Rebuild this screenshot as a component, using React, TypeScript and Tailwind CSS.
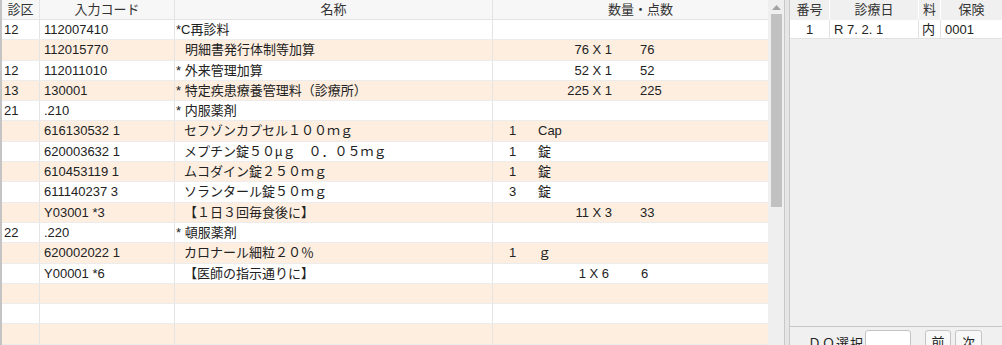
import React from 'react';

type Row = {
  k?: string;
  code?: string;
  name?: string;
  indent?: number;
  qty?: string;
  unit?: string;
  times?: string;
  tpad?: number;
  pts?: string;
  ppad?: number;
};

const rows: Row[] = [
  { k: '12', code: '112007410', name: '*C再診料' },
  { code: '112015770', name: '明細書発行体制等加算', indent: 9, times: '76 X 1', pts: '76' },
  { k: '12', code: '112011010', name: '* 外来管理加算', times: '52 X 1', pts: '52' },
  { k: '13', code: '130001', name: '* 特定疾患療養管理料（診療所）', times: '225 X 1', pts: '225' },
  { k: '21', code: '.210', name: '* 内服薬剤' },
  { code: '616130532 1', name: 'セフゾンカプセル１００ｍｇ', indent: 8, qty: '1', unit: 'Cap' },
  { code: '620003632 1', name: 'メプチン錠５０µｇ　０．０５ｍｇ', indent: 8, qty: '1', unit: '錠' },
  { code: '610453119 1', name: 'ムコダイン錠２５０ｍｇ', indent: 8, qty: '1', unit: '錠' },
  { code: '611140237 3', name: 'ソランタール錠５０ｍｇ', indent: 8, qty: '3', unit: '錠' },
  { code: 'Y03001 *3', name: '【１日３回毎食後に】', indent: 8, times: '11 X 3', pts: '33' },
  { k: '22', code: '.220', name: '* 頓服薬剤' },
  { code: '620002022 1', name: 'カロナール細粒２０％', indent: 8, qty: '1', unit: 'ｇ' },
  { code: 'Y00001 *6', name: '【医師の指示通りに】', indent: 8, times: '1 X 6', tpad: 3, pts: '6', ppad: 29 },
  {},
  {},
  {},
];

function Qty({ r }: { r: Row }) {
  if (r.qty) {
    return (
      <div className="flex">
        <span className="w-[45px] pl-[16px]">{r.qty}</span>
        <span>{r.unit}</span>
      </div>
    );
  }
  if (r.times) {
    return (
      <div className="flex">
        <span className="w-[119px] text-right" style={{ paddingRight: r.tpad ?? 0 }}>
          {r.times}
        </span>
        <span style={{ paddingLeft: r.ppad ?? 28 }}>{r.pts}</span>
      </div>
    );
  }
  return null;
}

function OrderTable() {
  return (
    <div className="flex w-[768px] shrink-0 flex-col border-l-2 border-[#c4c4c4] bg-white">
      <div className="flex h-[20px] shrink-0 items-center border-b border-[#e4e4e4] bg-[#f7f7f7] text-[#333]">
        <div className="w-[38px] border-r border-[#e4e4e4] text-center">診区</div>
        <div className="w-[135px] border-r border-[#e4e4e4] text-center">入力コード</div>
        <div className="w-[318px] border-r border-[#e4e4e4] text-center">名称</div>
        <div className="flex-1 pl-[115px]">数量・点数</div>
      </div>
      {rows.map((r, i) => (
        <div
          key={i}
          className={`flex h-[20.3px] shrink-0 items-center border-b border-[#ececec] ${
            i % 2 === 1 ? 'bg-[#fdeee0]' : 'bg-white'
          }`}
        >
          <div className="h-full w-[38px] border-r border-[#e4e4e4] pl-[2px] leading-[20px]">{r.k}</div>
          <div className="h-full w-[135px] border-r border-[#e4e4e4] pl-[4px] leading-[20px]">{r.code}</div>
          <div className="h-full w-[318px] border-r border-[#e4e4e4] pl-[1px] leading-[20px] whitespace-nowrap">
            <span style={{ marginLeft: r.indent ?? 0 }}>{r.name}</span>
          </div>
          <div className="h-full flex-1 leading-[20px]">
            <Qty r={r} />
          </div>
        </div>
      ))}
    </div>
  );
}

function ScrollBar() {
  return (
    <div className="flex w-[16px] shrink-0 flex-col items-center bg-[#efefef] pt-[5px]">
      <svg width="9" height="5" viewBox="0 0 9 5">
        <polygon points="0,5 4.5,0 9,5" fill="#a3a3a3" />
      </svg>
      <div className="mt-[4px] h-[193px] w-[11px] bg-[#c1c1c1]" />
    </div>
  );
}

function HistoryPanel() {
  return (
    <div className="flex flex-1 flex-col bg-[#f0f0f0]">
      <div className="flex h-[327px] shrink-0 flex-col border-b border-[#c6c6c6]">
        <div className="flex h-[20px] items-center text-[#333]">
          <div className="w-[40px] border-r border-white text-center">番号</div>
          <div className="w-[89px] border-r border-white text-center">診療日</div>
          <div className="w-[22px] border-r border-white text-center">料</div>
          <div className="flex-1 text-center">保険</div>
        </div>
        <div className="flex h-[19px] items-center border-b border-[#e2e2e2] bg-white">
          <div className="h-full w-[40px] border-r border-[#e2e2e2] text-center leading-[19px]">1</div>
          <div className="h-full w-[89px] border-r border-[#e2e2e2] pl-[4px] leading-[19px]">R 7. 2. 1</div>
          <div className="h-full w-[22px] border-r border-[#e2e2e2] pl-[3px] leading-[19px]">内</div>
          <div className="h-full flex-1 pl-[4px] leading-[19px]">0001</div>
        </div>
      </div>
      <div className="flex shrink-0 items-start pt-[3px]">
        <span className="ml-[18px] mt-[4px] w-[57px] tracking-[1px]">ＤＯ選択</span>
        <div className="h-[22px] w-[46px] rounded-[3px] border border-[#c4c4c4] bg-white" />
        <div className="ml-[14px] flex h-[22px] w-[26px] items-center justify-center rounded-[3px] border border-[#c4c4c4] bg-[#f8f8f8] pt-[4px]">
          前
        </div>
        <div className="ml-[4px] flex h-[22px] w-[27px] items-center justify-center rounded-[3px] border border-[#c4c4c4] bg-[#f8f8f8] pt-[4px]">
          次
        </div>
      </div>
    </div>
  );
}

export default function App() {
  return (
    <div
      className="flex h-[345px] w-[1002px] overflow-hidden bg-[#f0f0f0] text-[13px] text-[#222]"
      style={{ fontFamily: '"Liberation Sans", "Noto Sans CJK JP", sans-serif' }}
    >
      <OrderTable />
      <ScrollBar />
      <div className="w-[6px] shrink-0 border-x border-[#c8c8c8] bg-[#e6e6e6]" />
      <HistoryPanel />
    </div>
  );
}
